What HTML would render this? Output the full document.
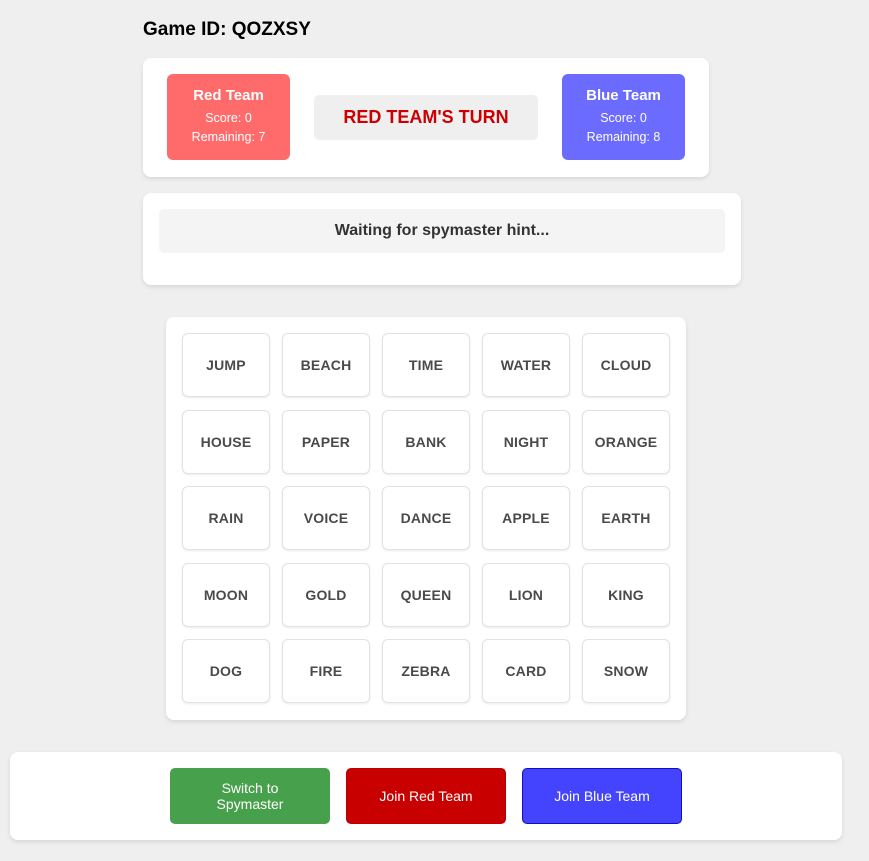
<!DOCTYPE html>
<html><head><style>
body{margin:0;background:#efefef;font-family:"Liberation Sans",Arial,sans-serif;width:869px;height:861px;position:relative;overflow:hidden}
.a{position:absolute;box-sizing:border-box}
.panel{background:#fff;border-radius:8px;box-shadow:0 2px 4px rgba(0,0,0,.1)}
.team{border-radius:6px;color:#fff;text-align:center}
.team b{display:block;font-size:15px;margin-top:13px}
.team div{font-size:12.5px;margin-top:5px;line-height:19px}
.card{width:88px;height:64px;border:1px solid #e2e2e2;border-radius:6px;background:#fff;box-shadow:0 1px 2px rgba(0,0,0,.08);display:flex;align-items:center;justify-content:center;font-weight:bold;font-size:14px;color:#4a4a4a;letter-spacing:.2px}
.btn{width:160px;height:56px;border-radius:5px;color:#fff;font-size:14px;display:flex;align-items:center;justify-content:center;text-align:center;line-height:16px}
</style></head><body>
<div class="a" style="left:143px;top:19px;font-size:19px;font-weight:bold;color:#000">Game ID: QOZXSY</div>
<div class="a panel" style="left:143px;top:58px;width:566px;height:119px"></div>
<div class="a team" style="left:167px;top:74px;width:123px;height:86px;background:#ff6b6b"><b>Red Team</b><div>Score: 0<br>Remaining: 7</div></div>
<div class="a" style="left:314px;top:95px;width:224px;height:45px;background:#efefef;border-radius:5px;color:#cc0000;font-weight:bold;font-size:18px;display:flex;align-items:center;justify-content:center">RED TEAM'S TURN</div>
<div class="a team" style="left:562px;top:74px;width:123px;height:86px;background:#6b6bff"><b>Blue Team</b><div>Score: 0<br>Remaining: 8</div></div>
<div class="a panel" style="left:143px;top:193px;width:598px;height:92px"></div>
<div class="a" style="left:159px;top:209px;width:566px;height:44px;background:#f4f4f4;border-radius:5px;font-weight:bold;font-size:16px;color:#333;display:flex;align-items:center;justify-content:center">Waiting for spymaster hint...</div>
<div class="a panel" style="left:166px;top:317px;width:520px;height:403px"></div>
<div id="g"></div>
<div class="a panel" style="left:10px;top:752px;width:832px;height:88px"></div>
<div class="a btn" style="left:170px;top:768px;background:#47a04b">Switch to<br>Spymaster</div>
<div class="a btn" style="left:346px;top:768px;background:#c80000;border:1px solid #b00">Join Red Team</div>
<div class="a btn" style="left:522px;top:768px;background:#4444ff;border:1px solid #1010c0">Join Blue Team</div>
<script>
var w=["JUMP","BEACH","TIME","WATER","CLOUD","HOUSE","PAPER","BANK","NIGHT","ORANGE","RAIN","VOICE","DANCE","APPLE","EARTH","MOON","GOLD","QUEEN","LION","KING","DOG","FIRE","ZEBRA","CARD","SNOW"];
var t=[333,410,486,563,639],h="";
w.forEach(function(x,i){h+='<div class="a card" style="left:'+(182+100*(i%5))+'px;top:'+t[Math.floor(i/5)]+'px">'+x+'</div>'});
document.getElementById("g").innerHTML=h;
</script>
</body></html>
